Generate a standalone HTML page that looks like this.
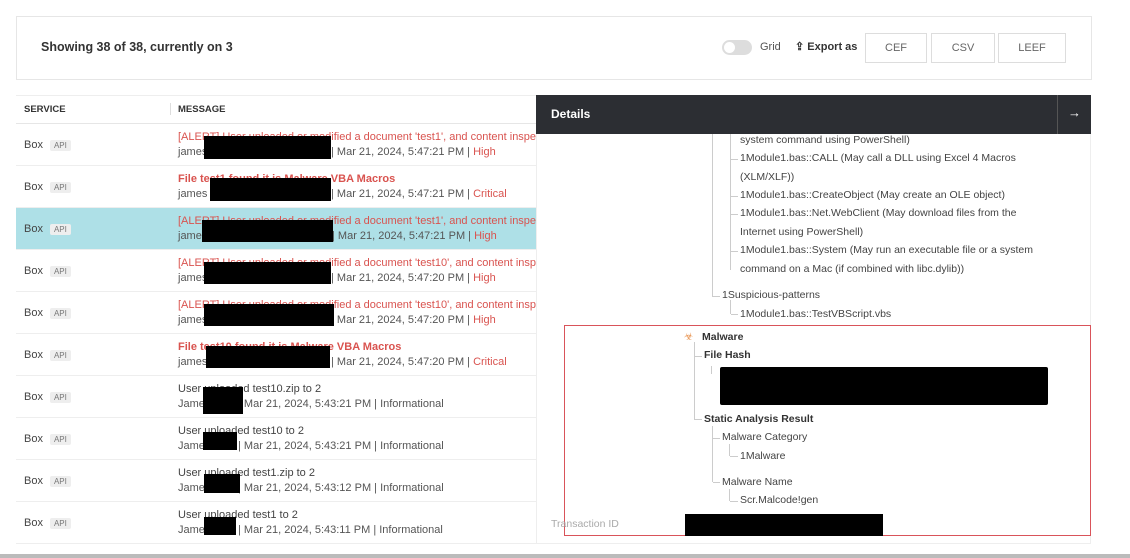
<!DOCTYPE html>
<html><head><style>
*{margin:0;padding:0;box-sizing:border-box}
body{width:1130px;height:558px;background:#fff;font-family:"Liberation Sans",sans-serif;position:relative;overflow:hidden;color:#444}
.a{position:absolute}
.blk{position:absolute;background:#000}
.t{font-size:11px;white-space:nowrap}
.row{position:absolute;left:16px;width:520px;height:42px;border-bottom:1px solid #eee;overflow:hidden}
.svc{position:absolute;left:8px;top:15px;font-size:11px;color:#444}
.api{display:inline-block;margin-left:7px;background:#eee;color:#777;font-size:8px;padding:1px 4px;border-radius:2px}
.m1{position:absolute;left:162px;top:7px;font-size:11px;white-space:nowrap}
.m2{position:absolute;left:162px;top:22px;width:360px;height:14px;font-size:11px;white-space:nowrap;color:#555}
.m2 b{font-weight:normal;position:absolute;top:0}
.red{color:#d9534f}
.btn{position:absolute;top:33px;height:30px;border:1px solid #ddd;font-size:11px;color:#666;text-align:center;line-height:28px}
.d{position:absolute;font-size:10.5px;color:#444;white-space:nowrap}
.ln{position:absolute;background:#ccc}
</style></head><body>
<div class="a" style="left:16px;top:16px;width:1076px;height:64px;border:1px solid #e6e6e6"></div>
<div class="a" style="left:41px;top:40px;font-size:12.5px;font-weight:bold;color:#333">Showing 38 of 38, currently on 3</div>
<div class="a" style="left:722px;top:40px;width:30px;height:15px;border-radius:8px;background:#ddd"></div>
<div class="a" style="left:724px;top:42px;width:11px;height:11px;border-radius:6px;background:#fff"></div>
<div class="a t" style="left:760px;top:41px;color:#555">Grid</div>
<div class="a t" style="left:795px;top:40px;color:#333;font-weight:bold">⇪ Export as</div>
<div class="btn" style="left:865px;width:62px">CEF</div>
<div class="btn" style="left:931px;width:64px">CSV</div>
<div class="btn" style="left:998px;width:68px">LEEF</div>

<div class="a" style="left:16px;top:95px;width:520px;height:29px;border-bottom:1px solid #e6e6e6;border-top:1px solid #eee"></div>
<div class="a" style="left:24px;top:104px;font-size:9.5px;font-weight:bold;color:#333">SERVICE</div>
<div class="a" style="left:170px;top:103px;width:1px;height:12px;background:#ddd"></div>
<div class="a" style="left:178px;top:104px;font-size:9.5px;font-weight:bold;color:#333">MESSAGE</div>

<div class="row" style="top:124px"><div class="svc">Box<span class="api">API</span></div><div class="m1 red">[ALERT] User uploaded or modified a document 'test1', and content inspection</div><div class="m2">james<b style="left:153px">| Mar 21, 2024, 5:47:21 PM | <span class="red">High</span></b></div></div>
<div class="row" style="top:166px"><div class="svc">Box<span class="api">API</span></div><div class="m1 red" style="font-weight:bold">File test1 found it is Malware VBA Macros</div><div class="m2">james<b style="left:153px">| Mar 21, 2024, 5:47:21 PM | <span class="red">Critical</span></b></div></div>
<div class="row" style="top:208px;background:#aee0e7"><div class="svc">Box<span class="api">API</span></div><div class="m1 red">[ALERT] User uploaded or modified a document 'test1', and content inspection</div><div class="m2">james<b style="left:154px">| Mar 21, 2024, 5:47:21 PM | <span class="red">High</span></b></div></div>
<div class="row" style="top:250px"><div class="svc">Box<span class="api">API</span></div><div class="m1 red">[ALERT] User uploaded or modified a document 'test10', and content inspect</div><div class="m2">james<b style="left:153px">| Mar 21, 2024, 5:47:20 PM | <span class="red">High</span></b></div></div>
<div class="row" style="top:292px"><div class="svc">Box<span class="api">API</span></div><div class="m1 red">[ALERT] User uploaded or modified a document 'test10', and content inspect</div><div class="m2">james<b style="left:153px">| Mar 21, 2024, 5:47:20 PM | <span class="red">High</span></b></div></div>
<div class="row" style="top:334px"><div class="svc">Box<span class="api">API</span></div><div class="m1 red" style="font-weight:bold">File test10 found it is Malware VBA Macros</div><div class="m2">james<b style="left:153px">| Mar 21, 2024, 5:47:20 PM | <span class="red">Critical</span></b></div></div>
<div class="row" style="top:376px"><div class="svc">Box<span class="api">API</span></div><div class="m1">User uploaded test10.zip to 2</div><div class="m2">James<b style="left:60px">| Mar 21, 2024, 5:43:21 PM | Informational</b></div></div>
<div class="row" style="top:418px"><div class="svc">Box<span class="api">API</span></div><div class="m1">User uploaded test10 to 2</div><div class="m2">James<b style="left:60px">| Mar 21, 2024, 5:43:21 PM | Informational</b></div></div>
<div class="row" style="top:460px"><div class="svc">Box<span class="api">API</span></div><div class="m1">User uploaded test1.zip to 2</div><div class="m2">James<b style="left:60px">| Mar 21, 2024, 5:43:12 PM | Informational</b></div></div>
<div class="row" style="top:502px"><div class="svc">Box<span class="api">API</span></div><div class="m1">User uploaded test1 to 2</div><div class="m2">James<b style="left:60px">| Mar 21, 2024, 5:43:11 PM | Informational</b></div></div>

<div class="blk" style="left:204px;top:136px;width:127px;height:23px"></div>
<div class="blk" style="left:210px;top:178px;width:121px;height:23px"></div>
<div class="blk" style="left:202px;top:220px;width:131px;height:22px"></div>
<div class="blk" style="left:204px;top:262px;width:127px;height:22px"></div>
<div class="blk" style="left:204px;top:304px;width:130px;height:22px"></div>
<div class="blk" style="left:206px;top:346px;width:124px;height:22px"></div>
<div class="blk" style="left:203px;top:387px;width:40px;height:27px"></div>
<div class="blk" style="left:203px;top:432px;width:34px;height:18px"></div>
<div class="blk" style="left:204px;top:474px;width:36px;height:19px"></div>
<div class="blk" style="left:204px;top:517px;width:32px;height:18px"></div>

<div class="a" style="left:536px;top:95px;width:555px;height:449px;border:1px solid #eee;background:#fff"></div>
<div class="a" style="left:536px;top:95px;width:555px;height:39px;background:#2c2e33"></div>
<div class="a" style="left:551px;top:107px;color:#fff;font-weight:bold;font-size:12px">Details</div>
<div class="a" style="left:1057px;top:95px;width:1px;height:39px;background:#555"></div>
<div class="a" style="left:1068px;top:105px;color:#fff;font-size:13px">→</div>

<div class="ln" style="left:712px;top:134px;width:1px;height:162px"></div>
<div class="ln" style="left:730px;top:134px;width:1px;height:136px"></div>
<div class="d" style="left:740px;top:134px">system command using PowerShell)</div>
<div class="ln" style="left:731px;top:159px;width:7px;height:1px"></div>
<div class="d" style="left:740px;top:152px">1Module1.bas::CALL (May call a DLL using Excel 4 Macros</div>
<div class="d" style="left:740px;top:171px">(XLM/XLF))</div>
<div class="ln" style="left:731px;top:196px;width:7px;height:1px"></div>
<div class="d" style="left:740px;top:189px">1Module1.bas::CreateObject (May create an OLE object)</div>
<div class="ln" style="left:731px;top:214px;width:7px;height:1px"></div>
<div class="d" style="left:740px;top:207px">1Module1.bas::Net.WebClient (May download files from the</div>
<div class="d" style="left:740px;top:226px">Internet using PowerShell)</div>
<div class="ln" style="left:731px;top:251px;width:7px;height:1px"></div>
<div class="d" style="left:740px;top:244px">1Module1.bas::System (May run an executable file or a system</div>
<div class="d" style="left:740px;top:263px">command on a Mac (if combined with libc.dylib))</div>
<div class="ln" style="left:712px;top:296px;width:8px;height:1px"></div>
<div class="d" style="left:722px;top:289px">1Suspicious-patterns</div>
<div class="ln" style="left:730px;top:300px;width:1px;height:14px"></div>
<div class="ln" style="left:731px;top:314px;width:7px;height:1px"></div>
<div class="d" style="left:740px;top:308px">1Module1.bas::TestVBScript.vbs</div>

<div class="a" style="left:564px;top:325px;width:527px;height:211px;border:1.5px solid #d9535a"></div>
<div class="d" style="left:684px;top:331px;color:#e8924e">☣</div>
<div class="d" style="left:702px;top:331px;font-weight:bold;color:#333">Malware</div>
<div class="ln" style="left:694px;top:342px;width:1px;height:78px"></div>
<div class="ln" style="left:695px;top:356px;width:7px;height:1px"></div>
<div class="d" style="left:704px;top:349px;font-weight:bold;color:#333">File Hash</div>
<div class="ln" style="left:711px;top:366px;width:1px;height:8px"></div>
<div class="blk" style="left:720px;top:367px;width:328px;height:38px;border-radius:2px"></div>
<div class="ln" style="left:695px;top:419px;width:7px;height:1px"></div>
<div class="d" style="left:704px;top:413px;font-weight:bold;color:#333">Static Analysis Result</div>
<div class="ln" style="left:712px;top:426px;width:1px;height:56px"></div>
<div class="ln" style="left:713px;top:438px;width:7px;height:1px"></div>
<div class="d" style="left:722px;top:431px">Malware Category</div>
<div class="ln" style="left:729px;top:444px;width:1px;height:12px"></div>
<div class="ln" style="left:730px;top:456px;width:8px;height:1px"></div>
<div class="d" style="left:740px;top:450px">1Malware</div>
<div class="ln" style="left:713px;top:482px;width:7px;height:1px"></div>
<div class="d" style="left:722px;top:476px">Malware Name</div>
<div class="ln" style="left:729px;top:489px;width:1px;height:12px"></div>
<div class="ln" style="left:730px;top:501px;width:8px;height:1px"></div>
<div class="d" style="left:740px;top:494px">Scr.Malcode!gen</div>
<div class="d" style="left:551px;top:518px;color:#aaa">Transaction ID</div>
<div class="blk" style="left:685px;top:514px;width:198px;height:22px"></div>

<div class="a" style="left:0;top:554px;width:1130px;height:4px;background:#bbb"></div>
</body></html>
